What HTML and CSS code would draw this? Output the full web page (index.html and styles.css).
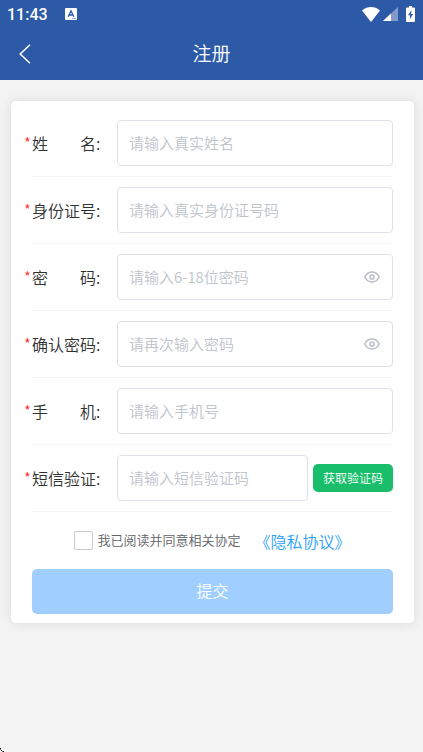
FILE: index.html
```html
<!DOCTYPE html>
<html lang="zh-CN">
<head>
<meta charset="utf-8">
<meta name="viewport" content="width=device-width, initial-scale=1">
<title>注册</title>
<link rel="stylesheet" href="styles.css">
</head>
<body>
<header class="header">
  <div class="status">
    <span class="status-time">11:43</span>
    <svg class="status-app" width="12" height="12" viewBox="0 0 12 12" aria-hidden="true">
      <rect width="12" height="12" rx="1" fill="#fff"/>
      <path d="M3.2 8.8 6 2.8 8.8 8.8M4.2 7h3.6" fill="none" stroke="#2d5aa7" stroke-width="1.4"/>
      <path d="M7.5 10.5h1M9.5 10.5h1" stroke="#2d5aa7" stroke-width="1"/>
    </svg>
    <div class="status-icons">
      <svg width="18" height="15" viewBox="0 0 18 15" aria-hidden="true">
        <path d="M0 3.4C5.2-1.1 12.8-1.1 18 3.4L9 15Z" fill="#fff"/>
      </svg>
      <svg class="signal" width="15" height="14" viewBox="0 0 15 14" aria-hidden="true">
        <path d="M0 14 15 0V14Z" fill="#8199cb"/>
        <path d="M0 14 8 6.5V14Z" fill="#fff"/>
      </svg>
      <svg class="battery" width="9" height="16" viewBox="0 0 9 16" aria-hidden="true">
        <path d="M3 0h3v1.5h2q1 0 1 1V15q0 1-1 1H1q-1 0-1-1V2.5q0-1 1-1h2Z" fill="#fff"/>
        <path d="M5.5 4 2 9.3h2.2L3.7 13.5 7.2 8H5Z" fill="#2d5aa7"/>
      </svg>
    </div>
  </div>
  <div class="nav">
    <button class="back" type="button" aria-label="返回">
      <svg width="12" height="20" viewBox="0 0 12 20" aria-hidden="true">
        <path d="M11 .7 1.2 10 11 19.3" fill="none" stroke="#fff" stroke-width="1.5"/>
      </svg>
    </button>
    <h1 class="title">注册</h1>
  </div>
</header>
<main class="page">
  <form class="card">
    <div class="row">
      <label class="label" for="name"><span class="star">*</span>姓　　名:</label>
      <div class="field"><input class="input" id="name" type="text" placeholder="请输入真实姓名"></div>
    </div>
    <div class="row">
      <label class="label" for="idno"><span class="star">*</span>身份证号:</label>
      <div class="field"><input class="input" id="idno" type="text" placeholder="请输入真实身份证号码"></div>
    </div>
    <div class="row">
      <label class="label" for="pwd"><span class="star">*</span>密　　码:</label>
      <div class="field">
        <input class="input" id="pwd" type="password" placeholder="请输入6-18位密码">
        <button class="eye" type="button" aria-label="显示密码">
          <svg width="16" height="12" viewBox="0 0 16 12" aria-hidden="true">
            <path d="M.8 6C4.2-.7 11.8-.7 15.2 6 11.8 12.7 4.2 12.7.8 6Z"/>
            <circle cx="8" cy="6" r="2.1"/>
          </svg>
        </button>
      </div>
    </div>
    <div class="row">
      <label class="label" for="pwd2"><span class="star">*</span>确认密码:</label>
      <div class="field">
        <input class="input" id="pwd2" type="password" placeholder="请再次输入密码">
        <button class="eye" type="button" aria-label="显示密码">
          <svg width="16" height="12" viewBox="0 0 16 12" aria-hidden="true">
            <path d="M.8 6C4.2-.7 11.8-.7 15.2 6 11.8 12.7 4.2 12.7.8 6Z"/>
            <circle cx="8" cy="6" r="2.1"/>
          </svg>
        </button>
      </div>
    </div>
    <div class="row">
      <label class="label" for="phone"><span class="star">*</span>手　　机:</label>
      <div class="field"><input class="input" id="phone" type="tel" placeholder="请输入手机号"></div>
    </div>
    <div class="row">
      <label class="label" for="code"><span class="star">*</span>短信验证:</label>
      <div class="field"><input class="input" id="code" type="text" placeholder="请输入短信验证码"></div>
      <button class="send" type="button">获取验证码</button>
    </div>
    <div class="agree">
      <input class="check" id="agree" type="checkbox">
      <label class="agree-text" for="agree">我已阅读并同意相关协定</label>
      <a class="link" href="#privacy">《隐私协议》</a>
    </div>
    <button class="submit" type="submit">提交</button>
  </form>
</main>
<svg class="corner" width="4" height="4" viewBox="0 0 4 4" shape-rendering="crispEdges" aria-hidden="true">
  <path d="M0 0h1v1H0zM1 2h1v1H1zM3 3h1v1H3z" fill="#111"/>
  <path d="M0 1h1v1H0zM2 3h1v1H2z" fill="#777"/>
</svg>
</body>
</html>
```
FILE: styles.css
```css
* {
  box-sizing: border-box;
}

body {
  margin: 0;
  min-height: 100vh;
  background: #f3f3f3;
  color: #303133;
  font-family: "Noto Sans CJK SC", sans-serif;
  font-size: 16px;
  font-weight: 350;
}

button,
input {
  font-family: inherit;
  font-weight: inherit;
  margin: 0;
}

button {
  border: 0;
  padding: 0;
  cursor: pointer;
}

svg {
  display: block;
}

.header {
  background: #2d5aa7;
  color: #fff;
}

.status {
  display: flex;
  align-items: center;
  height: 28px;
  padding: 0 8px 0 7px;
}

.status-time {
  padding-top: 2px;
  font: 500 16px/26px Roboto, sans-serif;
}

.status-app {
  margin-left: 17px;
}

.status-icons {
  display: flex;
  align-items: center;
  margin-left: auto;
}

.signal {
  margin-left: 3px;
}

.battery {
  margin-left: 8px;
}

.nav {
  display: grid;
  grid-template-columns: 48px 1fr 48px;
  align-items: center;
  height: 52px;
}

.back {
  display: flex;
  align-items: center;
  height: 48px;
  padding-left: 19px;
  background: none;
}

.title {
  margin: 0;
  padding-bottom: 2px;
  font-size: 19px;
  font-weight: inherit;
  line-height: 28px;
  text-align: center;
}

.page {
  padding: 21px 9px 21px 11px;
}

.card {
  padding: 9px 21px;
  border-radius: 5px;
  background: #fff;
  box-shadow: 0 0 12px rgba(0, 0, 0, 0.1);
}

.row {
  display: flex;
  align-items: center;
  gap: 5px;
  padding: 10px 0;
  border-bottom: 1px solid #f5f5f6;
}

.label {
  position: relative;
  flex: 0 0 80px;
  line-height: 24px;
  white-space: nowrap;
}

.star {
  position: absolute;
  right: 100%;
  padding-right: 1px;
  color: #f33;
  font-size: 15px;
}

.field {
  position: relative;
  flex: 1;
  min-width: 0;
}

.input {
  display: block;
  width: 100%;
  height: 46px;
  padding: 0 11px 2px;
  border: 1px solid #dfe1e8;
  border-radius: 4px;
  background: #fff;
  color: #303133;
  font-size: 15px;
}

.input::placeholder {
  color: #c0c4cc;
  opacity: 1;
}

.eye {
  position: absolute;
  top: 0;
  right: 0;
  display: flex;
  align-items: center;
  height: 100%;
  padding: 0 13px 0 12px;
  background: none;
}

.eye svg {
  fill: none;
  stroke: #b9bdc7;
  stroke-width: 1.5;
}

.send {
  flex: none;
  width: 80px;
  height: 28px;
  padding-bottom: 2px;
  border-radius: 5px;
  background: #19be6b;
  color: #fff;
  font-size: 12px;
}

.agree {
  display: flex;
  align-items: center;
  justify-content: center;
  height: 57px;
}

.check {
  appearance: none;
  flex: none;
  width: 19px;
  height: 19px;
  border: 1px solid #c8c9cc;
  border-radius: 2px;
  background: #fff;
}

.check:checked {
  background: #2d9cff;
}

.agree-text {
  padding: 0 14px 2px 4px;
  color: #606266;
  font-size: 13px;
}

.link {
  color: #2b9ff5;
  text-decoration: none;
}

.submit {
  display: block;
  width: 100%;
  height: 45px;
  padding-bottom: 4px;
  border-radius: 5px;
  background: #a0cfff;
  color: #fff;
  font-size: 16px;
}

.corner {
  position: fixed;
  bottom: 0;
  left: 0;
}
```
